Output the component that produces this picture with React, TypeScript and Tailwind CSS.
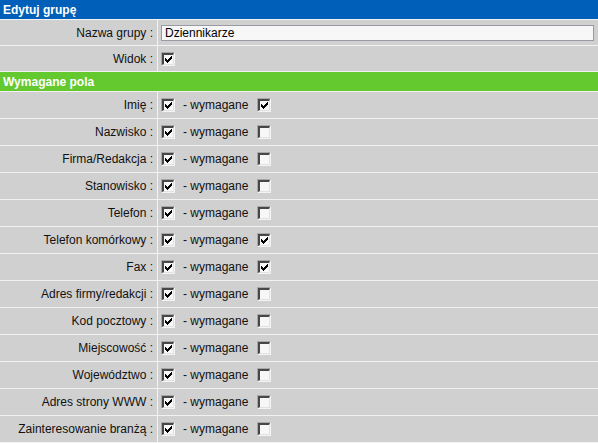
const fields: { label: string; required: boolean }[] = [
  { label: 'Imię', required: true },
  { label: 'Nazwisko', required: false },
  { label: 'Firma/Redakcja', required: false },
  { label: 'Stanowisko', required: false },
  { label: 'Telefon', required: false },
  { label: 'Telefon komórkowy', required: true },
  { label: 'Fax', required: true },
  { label: 'Adres firmy/redakcji', required: false },
  { label: 'Kod pocztowy', required: false },
  { label: 'Miejscowość', required: false },
  { label: 'Województwo', required: false },
  { label: 'Adres strony WWW', required: false },
  { label: 'Zainteresowanie branżą', required: false },
];

const Checkbox = ({ checked }: { checked: boolean }) => (
  <span className="inline-flex h-[14px] w-[14px] shrink-0 border border-t-[#a8a8a8] border-l-[#a8a8a8] border-r-[#f4f4f4] border-b-[#f4f4f4] bg-[#eeeeee]">
    <span className="flex h-full w-full items-center justify-center border-t-2 border-l-2 border-r border-b border-t-[#474747] border-l-[#474747] border-r-[#e2e2e2] border-b-[#e2e2e2] bg-[#f7f7f7]">
      {checked && (
        <svg width="7" height="7" viewBox="0 0 7 7">
          <path d="M0 2h1v1h1v1h1V3h1V2h1V1h1V0h1v3h-1v1h-1v1h-1v1h-1v1h-1V6H1V5H0z" fill="#000" />
        </svg>
      )}
    </span>
  </span>
);

const Row = ({ label, children, h = 'h-[26px]' }: { label: string; children: React.ReactNode; h?: string }) => (
  <div className={`grid grid-cols-[157px_1fr] gap-x-px ${h}`}>
    <div className="flex items-center justify-end bg-[#d0d0d0] pr-[4px] text-[#111]">{label} :</div>
    <div className="flex items-center bg-[#d0d0d0] pl-[3px] pr-[4px]">{children}</div>
  </div>
);

const App = () => {
  return (
    <div className="flex h-[443px] w-full flex-col gap-y-px overflow-hidden bg-[#f2f2f2] font-['Liberation_Sans',Arial,sans-serif] text-[12px] leading-none">
      <div className="flex h-[19px] shrink-0 items-center bg-[#005fb8] pl-[3px] font-bold text-white">Edytuj grupę</div>
      <Row label="Nazwa grupy" h="h-[25px]">
        <div className="flex h-[16px] w-full items-center border border-[#9a9aa2] bg-[#f7f7f7] pl-[3px] text-black">
          Dziennikarze
        </div>
      </Row>
      <Row label="Widok" h="h-[25px]">
        <Checkbox checked />
      </Row>
      <div className="flex h-[19px] shrink-0 items-center bg-[#63c92f] pl-[3px] font-bold text-white">Wymagane pola</div>
      {fields.map((f) => (
        <Row key={f.label} label={f.label}>
          <Checkbox checked />
          <span className="ml-[8px] mr-[9px] text-[#111]">- wymagane</span>
          <Checkbox checked={f.required} />
        </Row>
      ))}
    </div>
  );
};

export default App;
